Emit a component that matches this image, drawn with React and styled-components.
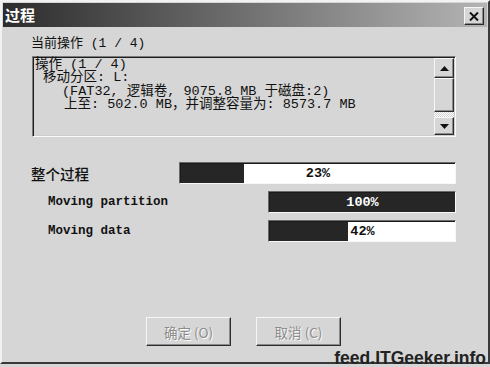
import React from 'react'
import styled, { createGlobalStyle } from 'styled-components'

const GlobalStyle = createGlobalStyle`
  html, body {
    margin: 0;
    padding: 0;
    background: #d6d6d6;
  }
  body {
    width: 490px;
    height: 367px;
    overflow: hidden;
    font-family: "Noto Sans CJK SC", sans-serif;
  }
`

const Page = styled.div`
  position: relative;
  width: 490px;
  height: 367px;
`

const Window = styled.div`
  box-sizing: border-box;
  width: 490px;
  height: 364px;
  padding: 1px;
  background: #d6d6d6;
  border: 2px solid;
  border-color: #f2f2f2 #3a3a3a #3a3a3a #f2f2f2;
  display: flex;
  flex-direction: column;
`

const TitleBar = styled.div`
  height: 24px;
  flex: none;
  display: flex;
  align-items: center;
  justify-content: space-between;
  padding: 0 3px 0 2px;
  background: linear-gradient(to right, #2c2c2c, #b4b4b4);
`

const Title = styled.span`
  color: #fff;
  font-size: 15px;
  font-weight: 700;
  line-height: 24px;
`

const CloseButton = styled.div`
  box-sizing: border-box;
  width: 20px;
  height: 18px;
  margin-top: 2px;
  display: flex;
  align-items: center;
  justify-content: center;
  background: #d6d6d6;
  border: 1px solid;
  border-color: #f6f6f6 #2a2a2a #2a2a2a #f6f6f6;
  box-shadow: inset -1px -1px 0 #8a8a8a;
`

const Body = styled.div`
  flex: 1;
  display: flex;
  flex-direction: column;
  padding: 9px 31px 15px 28px;
`

const Label = styled.div`
  font-family: "Liberation Mono", "Noto Sans CJK SC", monospace;
  font-size: 13px;
  line-height: 15px;
  color: #111;
`

const LogBox = styled.div`
  box-sizing: border-box;
  height: 81px;
  margin: 5px 0 0 1px;
  display: flex;
  border: 1px solid;
  border-color: #7c7c7c #fafafa #fafafa #7c7c7c;
  box-shadow: inset 1px 1px 0 #1e1e1e, inset -1px -1px 0 #cdcdcd;
  padding: 1px;
`

const LogText = styled.div`
  flex: 1;
  padding: 0 0 0 1px;
  font-family: "Liberation Mono", "Noto Sans CJK SC", monospace;
  font-size: 13.5px;
  line-height: 13.4px;
  color: #111;
  white-space: pre;
`

const LogLine = styled.div`
  padding-left: ${props => props.indent || 0}px;
`

const ScrollBar = styled.div`
  width: 20px;
  display: flex;
  flex-direction: column;
`

const ScrollButton = styled.div`
  box-sizing: border-box;
  height: ${props => props.h}px;
  flex: none;
  display: flex;
  align-items: center;
  justify-content: center;
  background: #d6d6d6;
  border: 1px solid;
  border-color: #f6f6f6 #2e2e2e #2e2e2e #f6f6f6;
  box-shadow: inset -1px -1px 0 #8a8a8a;
`

const Track = styled.div`
  flex: 1;
  background: repeating-conic-gradient(#ffffff 0 25%, #d0d0d0 0 50%) 0 0 / 2px 2px;
`

const Progress = styled.div`
  margin-top: 25px;
  display: flex;
  flex-direction: column;
  gap: 7px;
`

const Row = styled.div`
  height: 22px;
  display: flex;
  align-items: center;
  justify-content: space-between;
  padding-left: ${props => props.sub ? 17 : 0}px;
`

const RowLabel = styled.span`
  font-family: ${props => props.sub ? '"Liberation Mono", monospace' : '"Noto Sans CJK SC", sans-serif'};
  font-size: ${props => props.sub ? '12.5px' : '14.5px'};
  font-weight: ${props => props.sub ? 700 : 500};
  color: #111;
`

const Bar = styled.div`
  box-sizing: border-box;
  width: ${props => props.w}px;
  height: 22px;
  border: 1px solid;
  border-color: #6a6a6a #f8f8f8 #f8f8f8 #6a6a6a;
  box-shadow: inset 1px 1px 0 #1a1a1a;
  padding: 1px 0 0 1px;
`

const BarTrack = styled.div`
  position: relative;
  height: 100%;
  background: #fff;
`

const BarFill = styled.div`
  height: 100%;
  background: #262626;
`

const BarText = styled.div`
  position: absolute;
  inset: 0;
  display: flex;
  align-items: center;
  justify-content: center;
  font-family: "Liberation Mono", monospace;
  font-size: 13.5px;
  font-weight: 700;
  color: ${props => props.light ? '#fff' : '#111'};
`

const Buttons = styled.div`
  margin-top: auto;
  display: flex;
  justify-content: center;
  gap: 25px;
`

const Button = styled.div`
  box-sizing: border-box;
  width: 85px;
  height: 29px;
  display: flex;
  align-items: center;
  justify-content: center;
  background: #d6d6d6;
  border: 1px solid;
  border-color: #f6f6f6 #2e2e2e #2e2e2e #f6f6f6;
  box-shadow: inset -1px -1px 0 #8a8a8a;
  font-family: "Noto Sans CJK SC", sans-serif;
  font-size: 13.5px;
  color: #8c8c8c;
  text-shadow: 1px 1px 0 #fafafa;
`

const Watermark = styled.div`
  position: absolute;
  right: 4px;
  bottom: 0;
  font-family: "Liberation Sans", sans-serif;
  font-size: 17.5px;
  line-height: 17px;
  font-weight: 700;
  color: #222;
`

const Arrow = ({ down }) => (
  <svg width="9" height="5" viewBox="0 0 9 5">
    <polygon points={down ? '0,0 9,0 4.5,5' : '0,5 9,5 4.5,0'} fill="#111" />
  </svg>
)

const ProgressBar = ({ w, pct }) => (
  <Bar w={w}>
    <BarTrack>
      <BarFill style={{ width: `${pct}%` }} />
      <BarText light={pct > 60}>{pct}%</BarText>
    </BarTrack>
  </Bar>
)

const App = () => (
  <Page>
    <GlobalStyle />
    <Window>
      <TitleBar>
        <Title>过程</Title>
        <CloseButton>
          <svg width="10" height="9" viewBox="0 0 10 9">
            <path d="M1 0.5 L9 8.5 M9 0.5 L1 8.5" stroke="#111" strokeWidth="2" />
          </svg>
        </CloseButton>
      </TitleBar>
      <Body>
        <Label>当前操作 (1 / 4)</Label>
        <LogBox>
          <LogText>
            <LogLine>操作 (1 / 4)</LogLine>
            <LogLine indent={8}>移动分区: L:</LogLine>
            <LogLine indent={27}>(FAT32, 逻辑卷, 9075.8 MB 于磁盘:2)</LogLine>
            <LogLine indent={29}>上至: 502.0 MB，并调整容量为: 8573.7 MB</LogLine>
          </LogText>
          <ScrollBar>
            <ScrollButton h={20}><Arrow /></ScrollButton>
            <ScrollButton h={34} />
            <Track />
            <ScrollButton h={18}><Arrow down /></ScrollButton>
          </ScrollBar>
        </LogBox>
        <Progress>
          <Row>
            <RowLabel>整个过程</RowLabel>
            <ProgressBar w={277} pct={23} />
          </Row>
          <Row sub>
            <RowLabel sub>Moving partition</RowLabel>
            <ProgressBar w={188} pct={100} />
          </Row>
          <Row sub>
            <RowLabel sub>Moving data</RowLabel>
            <ProgressBar w={188} pct={42} />
          </Row>
        </Progress>
        <Buttons>
          <Button>确定 (O)</Button>
          <Button>取消 (C)</Button>
        </Buttons>
      </Body>
    </Window>
    <Watermark>feed.ITGeeker.info</Watermark>
  </Page>
)

export default App
